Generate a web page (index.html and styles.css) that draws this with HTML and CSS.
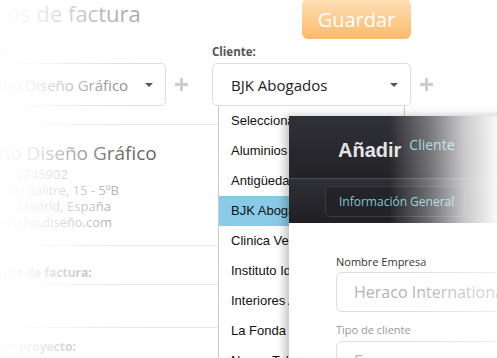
FILE: index.html
```html
<!DOCTYPE html>
<html lang="es">
<head>
  <meta charset="UTF-8">
  <meta name="viewport" content="width=device-width, initial-scale=1.0">
  <title>Nueva factura</title>
  <link rel="stylesheet" href="styles.css">
</head>
<body>

  <div class="page">
    <!-- Cabecera -->
    <h1 class="title">Datos de factura</h1>
    <div class="actions">
      <button class="save-btn">Guardar</button>
    </div>

    <!-- Emisor -->
    <div class="field">
      <label class="field-label">Emisor:</label>
      <div class="select-row">
        <div class="select muted">Risho Diseño Gráfico <span class="caret"></span></div>
        <svg class="plus" width="13" height="13" viewBox="0 0 13 13"><path d="M6.5 0v13M0 6.5h13"/></svg>
      </div>
    </div>

    <!-- Cliente -->
    <div class="field">
      <label class="field-label">Cliente:</label>
      <div class="select-row">
        <div class="select">BJK Abogados <span class="caret"></span></div>
        <svg class="plus" width="13" height="13" viewBox="0 0 13 13"><path d="M6.5 0v13M0 6.5h13"/></svg>
      </div>
    </div>

    <div class="details">
      <div class="company">
        <div class="company-name">Risho Diseño Gráfico</div>
        <div class="company-line">Tel. 91 9345902</div>
        <div class="company-line">Calle del Salitre, 15 - 5ºB</div>
        <div class="company-line">28012, Madrid, España</div>
        <div class="company-line">info@risho.diseño.com</div>
      </div>
      <div class="section-label">Concepto de factura:</div>
      <div class="section-empty"></div>
      <div class="section-label small">Nombre proyecto:</div>
    </div>
  </div>

  <div class="fade-left"></div>

  <!-- Lista desplegable de clientes -->
  <ul class="dropdown">
    <li>Seleccionar cliente</li>
    <li>Aluminios Pérez</li>
    <li>Antigüedades Ruiz</li>
    <li class="active">BJK Abogados</li>
    <li>Clinica Veterinaria</li>
    <li>Instituto Idiomas</li>
    <li>Interiores Arte</li>
    <li>La Fonda</li>
    <li>Nuevo Taller</li>
  </ul>

  <!-- Ventana: Añadir cliente -->
  <div class="modal">
    <div class="modal-head">
      <h2>Añadir</h2>
      <span class="modal-sub">Cliente</span>
    </div>
    <div class="modal-tabs">
      <button class="tab">Información General</button>
      <button class="tab">Contacto</button>
    </div>
    <div class="modal-body">
      <label class="input-label">Nombre Empresa</label>
      <div class="input">Heraco International</div>
      <label class="input-label light">Tipo de cliente</label>
      <div class="input">Empresa</div>
    </div>
  </div>

</body>
</html>
```

FILE: styles.css
```css
* {
  margin: 0;
  padding: 0;
  box-sizing: border-box;
}

body {
  width: 497px;
  height: 358px;
  overflow: hidden;
  position: relative;
  background-color: #fff;
  font-family: 'Open Sans', sans-serif;
}

.page {
  margin-left: -33px;
  display: grid;
  grid-template-columns: 245px 1fr;
}

.title {
  font-size: 22px;
  font-weight: normal;
  line-height: 26px;
  color: #aaa;
  height: 44px;
  padding-left: 4px;
  white-space: nowrap;
}

.actions {
  padding-left: 90px;
}

.save-btn {
  width: 109px;
  height: 40px;
  margin-top: -1px;
  border: none;
  border-radius: 6px;
  background: linear-gradient(#fee0b6, #fbb96a);
  color: white;
  font-family: 'Open Sans', sans-serif;
  font-size: 20px;
}

.field-label {
  display: block;
  font-size: 11.5px;
  font-weight: bold;
  line-height: 16px;
  color: #555;
  margin-bottom: 3px;
}

.select-row {
  display: flex;
  align-items: center;
  gap: 9px;
}

.select {
  width: 199px;
  height: 43px;
  display: flex;
  align-items: center;
  justify-content: space-between;
  padding: 0 12px 0 18px;
  border: 1px solid #ddd;
  border-radius: 5px;
  font-size: 15px;
  color: #222;
  white-space: nowrap;
}

.select.muted {
  padding-left: 15px;
  color: #888;
}

.caret {
  border-left: 4px solid transparent;
  border-right: 4px solid transparent;
  border-top: 4px solid #555;
}

.plus {
  stroke: #ccc;
  stroke-width: 3;
}

.details {
  grid-column: 1 / -1;
  margin-top: 18px;
}

.company {
  border-top: 1px solid #e8e8e8;
  padding: 16px 0 15px 6px;
}

.company-name {
  font-size: 19px;
  line-height: 24px;
  color: #666;
  white-space: nowrap;
}

.company-line {
  font-size: 13px;
  line-height: 16px;
  color: #aaa;
  white-space: nowrap;
}

.company-name + .company-line {
  margin-top: 1px;
}

.section-label {
  border-top: 1px solid #e8e8e8;
  height: 39px;
  padding-top: 19px;
  font-size: 12px;
  font-weight: bold;
  line-height: 16px;
  color: #aaa;
  white-space: nowrap;
}

.section-label.small {
  padding-top: 11px;
}

.section-empty {
  border-top: 1px solid #e8e8e8;
  height: 43px;
}

.fade-left {
  position: absolute;
  left: 0;
  top: 0;
  width: 150px;
  height: 100%;
  background: linear-gradient(to right, rgba(255,255,255,0.98) 0, rgba(255,255,255,0.88) 30px, rgba(255,255,255,0.5) 70px, rgba(255,255,255,0.12) 110px, rgba(255,255,255,0) 145px);
}

.dropdown {
  position: absolute;
  left: 218px;
  top: 106px;
  width: 187px;
  height: 260px;
  list-style: none;
  background-color: #fff;
  border: 1px solid #ccc;
  border-top: none;
}

.dropdown li {
  height: 30px;
  line-height: 30px;
  padding-left: 12px;
  font-family: 'Liberation Sans', Arial, sans-serif;
  font-size: 13px;
  color: #111;
  white-space: nowrap;
}

.dropdown li.active {
  background-color: #89cbe6;
}

.modal {
  position: absolute;
  left: 289px;
  top: 116px;
  width: 260px;
  height: 260px;
  background-color: #fff;
  box-shadow: -4px 0 9px rgba(0, 0, 0, 0.25);
}

.modal::after {
  content: '';
  position: absolute;
  left: 0;
  top: 0;
  width: 208px;
  height: 107px;
  background: linear-gradient(to right, rgba(255,255,255,0) 100px, rgba(255,255,255,0.35) 140px, rgba(255,255,255,0.75) 175px, rgba(255,255,255,0.97) 208px);
}

.modal-head {
  height: 63px;
  display: flex;
  align-items: flex-start;
  padding: 22px 0 0 49px;
  background: linear-gradient(#303037, #222227);
  border-bottom: 1px solid #4b4b53;
}

.modal-head h2 {
  font-family: 'Liberation Sans', Arial, sans-serif;
  font-size: 20px;
  line-height: 24px;
  color: #e4e4e4;
}

.modal-sub {
  margin: -3px 0 0 8px;
  font-size: 14px;
  line-height: 20px;
  color: #7fd0d8;
}

.modal-tabs {
  height: 44px;
  display: flex;
  gap: 27px;
  padding: 7px 0 0 36px;
  background: linear-gradient(#2f2f36, #1f1f24);
}

.tab {
  width: 140px;
  height: 31px;
  flex-shrink: 0;
  padding-left: 13px;
  text-align: left;
  background-color: #232328;
  border: 1px solid #3b3b43;
  border-radius: 5px;
  font-family: 'Open Sans', sans-serif;
  font-size: 12px;
  color: #7fc9d0;
}

.modal-body {
  position: relative;
  padding: 31px 0 0 47px;
}

.modal-body::after {
  content: '';
  position: absolute;
  left: 0;
  top: 0;
  width: 208px;
  height: 100%;
  background: linear-gradient(to right, rgba(255,255,255,0) 120px, rgba(255,255,255,0.5) 208px);
}

.input-label {
  display: block;
  font-size: 11px;
  line-height: 16px;
  color: #333;
  margin-bottom: 2px;
}

.input-label.light {
  margin-top: 10px;
  margin-bottom: 3px;
  color: #999;
}

.input {
  width: 220px;
  height: 40px;
  padding-left: 17px;
  border: 1px solid #ddd;
  border-radius: 6px;
  font-size: 16px;
  line-height: 38px;
  color: #b3b3b3;
  white-space: nowrap;
  overflow: hidden;
}
```
